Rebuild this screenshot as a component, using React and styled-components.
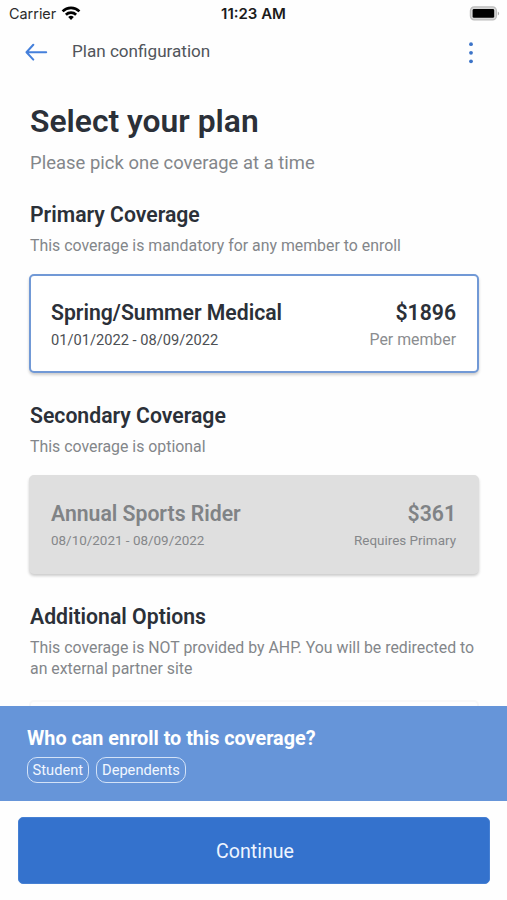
import React from "react";
import styled, { createGlobalStyle } from "styled-components";

const Global = createGlobalStyle`
  * { box-sizing: border-box; }
  body { margin: 0; background: #fff; font-family: Roboto, sans-serif; }
  h1, h2, h3, p { margin: 0; }
  button { font-family: inherit; }
`;

const Screen = styled.div`
  display: flex;
  flex-direction: column;
  height: 900px;
  overflow: hidden;
  background: #fefefe;
`;

const StatusBar = styled.div`
  flex: none;
  display: grid;
  grid-template-columns: 1fr auto 1fr;
  align-items: center;
  height: 27px;
  padding: 0 7px 0 9px;
  font-family: Inter, sans-serif;
  color: #1b1b1b;
`;

const Carrier = styled.div`
  display: flex;
  align-items: center;
  gap: 5px;
  font-size: 14.4px;
  color: #2b2b2b;
`;

const Clock = styled.div`
  margin-left: -2px;
  font-size: 15px;
  font-weight: 600;
  white-space: nowrap;
`;

const BatteryIcon = styled.svg`
  display: block;
  justify-self: end;
`;

const NavBar = styled.header`
  flex: none;
  display: flex;
  align-items: center;
  height: 50px;
  padding: 0 33px 0 25px;
`;

const IconButton = styled.button`
  display: flex;
  padding: 0;
  border: 0;
  background: none;
`;

const NavTitle = styled.div`
  flex: 1;
  margin: -1px 0 0 24px;
  font-size: 17.1px;
  line-height: 21px;
  color: #51555b;
`;

const Content = styled.main`
  flex: 1;
  min-height: 0;
  overflow: hidden;
  padding: 25px 28px 0 29px;
`;

const Title = styled.h1`
  padding-left: 1px;
  font-size: 31.8px;
  line-height: 38px;
  font-weight: 600;
  color: #2b3038;
`;

const Subtitle = styled.p`
  margin-top: 12px;
  padding-left: 1px;
  font-size: 18.4px;
  line-height: 22px;
  letter-spacing: 0.04px;
  color: #83868a;
`;

const Section = styled.section`
  margin-top: ${(p) => (p.$first ? 28 : 30.6)}px;
`;

const SectionTitle = styled.h2`
  padding-left: 1px;
  font-size: 21.2px;
  line-height: 26px;
  font-weight: 600;
  color: #2b3038;
`;

const SectionText = styled.p`
  margin-top: 6.7px;
  padding-left: 1px;
  font-size: 15.87px;
  line-height: 21.3px;
  color: #83868a;
`;

const cardTones = {
  selected: { bg: "#fff", border: "#7199d6", title: "#2b3038", date: "#4d5054" },
  disabled: { bg: "#dfdfdf", border: "#dfdfdf", title: "#808386", date: "#85878a" },
  plain: { bg: "#fefefe", border: "#f8f8f8", title: "#2b3038", date: "#4d5054" },
};

const PlanCard = styled.article`
  display: flex;
  justify-content: space-between;
  height: 99px;
  margin-top: ${(p) => (p.$tone === "plain" ? 20 : 17.6)}px;
  padding: 24.5px 21px 0 20px;
  border: 2px solid ${(p) => cardTones[p.$tone].border};
  border-radius: 5px;
  background: ${(p) => cardTones[p.$tone].bg};
  color: ${(p) => cardTones[p.$tone].title};
  box-shadow: ${(p) => (p.$tone === "plain" ? "none" : "0 2px 3px rgba(0, 0, 0, 0.2)")};
`;

const CardColumn = styled.div`
  text-align: ${(p) => (p.$end ? "right" : "left")};
`;

const CardHeading = styled.h3`
  font-size: 21.2px;
  line-height: 26px;
  font-weight: 600;
`;

const CardDetail = styled.p`
  margin-top: 3px;
  font-size: ${(p) => p.$size}px;
  line-height: 22px;
  color: ${(p) => (p.$muted ? "#8b8d90" : cardTones[p.$tone].date)};
`;

const EnrollBanner = styled.aside`
  flex: none;
  height: 95px;
  padding: 20px 27px 0;
  background: #6695d9;
  color: #fff;
`;

const BannerTitle = styled.h2`
  font-size: 19.8px;
  line-height: 25px;
  font-weight: 700;
`;

const Pills = styled.div`
  display: flex;
  gap: 7px;
  margin-top: 6px;
`;

const Pill = styled.span`
  height: 26px;
  padding: 0 5.4px 0 4.6px;
  border: 1.5px solid #d3e2f7;
  border-radius: 10px;
  font-size: 14.65px;
  line-height: 25px;
  color: #f2f7ff;
`;

const Footer = styled.footer`
  flex: none;
  height: 99px;
  padding: 16px 17px 0 18px;
`;

const ContinueButton = styled.button`
  width: 100%;
  height: 67px;
  padding: 1px 0 0 2px;
  border: 1px solid #4680d3;
  border-radius: 5px;
  background: #3472cd;
  color: #eef5ff;
  font-size: 19.6px;
`;

function Plan({ tone, name, dates, dateSize, price, note, noteSize }) {
  return (
    <PlanCard $tone={tone}>
      <CardColumn>
        <CardHeading>{name}</CardHeading>
        <CardDetail $tone={tone} $size={dateSize}>{dates}</CardDetail>
      </CardColumn>
      <CardColumn $end>
        <CardHeading>{price}</CardHeading>
        <CardDetail $tone={tone} $size={noteSize} $muted={tone === "selected"}>{note}</CardDetail>
      </CardColumn>
    </PlanCard>
  );
}

export default function App() {
  return (
    <Screen>
      <Global />
      <StatusBar>
        <Carrier>
          Carrier
          <svg width="20" height="15" viewBox="0 0 20 15" fill="none" stroke="#000" strokeWidth="2.7">
            <path d="M1.6 5.4 A12 12 0 0 1 18.4 5.4" />
            <path d="M4.9 8.8 A7.3 7.3 0 0 1 15.1 8.8" />
            <path d="M7.2 11 A4 4 0 0 1 12.8 11 L10 13.9 Z" fill="#000" stroke="none" />
          </svg>
        </Carrier>
        <Clock>11:23 AM</Clock>
        <BatteryIcon width="31" height="16" viewBox="0 0 31 16">
          <rect x="1.4" y="0.9" width="26" height="13" rx="3.8" fill="#d6d6d6" stroke="#bcbcbc" strokeWidth="1.2" />
          <rect x="3.6" y="3" width="21.6" height="8.8" rx="1.4" fill="#000" />
          <path d="M28.8 5.4 A2.3 2.3 0 0 1 28.8 9.5 Z" fill="#aaa" />
        </BatteryIcon>
      </StatusBar>
      <NavBar>
        <IconButton aria-label="Back">
          <svg width="23" height="18" viewBox="0 0 23 18" fill="none" stroke="#4580db" strokeWidth="2" strokeLinecap="round" strokeLinejoin="round">
            <path d="M21.2 9.2 H1.8 M8.3 1.8 L1.5 9.2 L8.3 16.6" />
          </svg>
        </IconButton>
        <NavTitle>Plan configuration</NavTitle>
        <IconButton aria-label="More options">
          <svg width="6" height="24" viewBox="0 0 6 24" fill="#3c74c8">
            <circle cx="3" cy="4.2" r="1.9" />
            <circle cx="3" cy="12.8" r="1.9" />
            <circle cx="3" cy="21.3" r="1.9" />
          </svg>
        </IconButton>
      </NavBar>
      <Content>
        <Title>Select your plan</Title>
        <Subtitle>Please pick one coverage at a time</Subtitle>
        <Section $first>
          <SectionTitle>Primary Coverage</SectionTitle>
          <SectionText>This coverage is mandatory for any member to enroll</SectionText>
          <Plan tone="selected" name="Spring/Summer Medical" dates="01/01/2022 - 08/09/2022" dateSize={14.65} price="$1896" note="Per member" noteSize={15.85} />
        </Section>
        <Section>
          <SectionTitle>Secondary Coverage</SectionTitle>
          <SectionText>This coverage is optional</SectionText>
          <Plan tone="disabled" name="Annual Sports Rider" dates="08/10/2021 - 08/09/2022" dateSize={13.45} price="$361" note="Requires Primary" noteSize={13.45} />
        </Section>
        <Section>
          <SectionTitle>Additional Options</SectionTitle>
          <SectionText>This coverage is NOT provided by AHP. You will be redirected to an external partner site</SectionText>
          <PlanCard $tone="plain" />
        </Section>
      </Content>
      <EnrollBanner>
        <BannerTitle>Who can enroll to this coverage?</BannerTitle>
        <Pills>
          <Pill>Student</Pill>
          <Pill>Dependents</Pill>
        </Pills>
      </EnrollBanner>
      <Footer>
        <ContinueButton>Continue</ContinueButton>
      </Footer>
    </Screen>
  );
}
